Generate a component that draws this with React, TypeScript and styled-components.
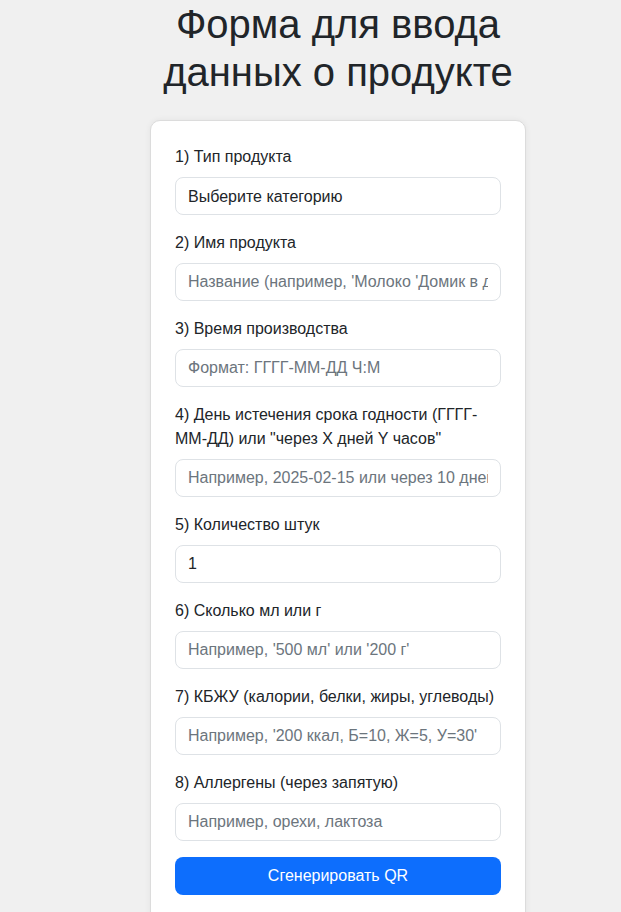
import React from "react";
import styled, { createGlobalStyle } from "styled-components";

const GlobalStyle = createGlobalStyle`
  html, body {
    margin: 0;
    padding: 0;
    background: #f0f0f0;
    font-family: "Liberation Sans", Arial, sans-serif;
    color: #212529;
  }
  * { box-sizing: border-box; }
`;

const Page = styled.div`
  width: 376px;
  margin-left: 150px;
`;

const Title = styled.h1`
  margin: 0 -30px 24px;
  font-size: 40px;
  line-height: 48px;
  font-weight: 400;
  text-align: center;
  color: #212529;
`;

const Card = styled.form`
  background: #fff;
  border: 1px solid #dcdcdc;
  border-radius: 10px;
  box-shadow: 0 0 6px rgba(0, 0, 0, 0.06);
  padding: 24px 24px 40px;
  display: flex;
  flex-direction: column;
`;

const Field = styled.div`
  display: flex;
  flex-direction: column;
  margin-bottom: 16px;
`;

const Label = styled.label`
  font-size: 16px;
  line-height: 24px;
  margin-bottom: 8px;
`;

const Input = styled.input`
  height: 38px;
  width: 100%;
  border: 1px solid #dee2e6;
  border-radius: 8px;
  padding: 0 12px;
  font-family: inherit;
  font-size: 16px;
  color: #212529;
  background: #fff;
  outline: none;
  &::placeholder {
    color: #6c757d;
  }
`;

const Select = styled.select`
  height: 38px;
  width: 100%;
  border: 1px solid #dee2e6;
  border-radius: 8px;
  padding: 0 12px;
  font-family: inherit;
  font-size: 16px;
  color: #212529;
  background: #fff;
  appearance: none;
  outline: none;
`;

const Button = styled.button`
  height: 38px;
  width: 100%;
  border: none;
  border-radius: 8px;
  background: #0d6efd;
  color: #fff;
  font-family: inherit;
  font-size: 16px;
  cursor: pointer;
`;

const fields = [
  { label: "2) Имя продукта", placeholder: "Название (например, 'Молоко 'Домик в деревне'')" },
  { label: "3) Время производства", placeholder: "Формат: ГГГГ-ММ-ДД Ч:М" },
  {
    label: '4) День истечения срока годности (ГГГГ-ММ-ДД) или "через X дней Y часов"',
    placeholder: "Например, 2025-02-15 или через 10 дней 5 часов",
  },
  { label: "5) Количество штук", value: "1" },
  { label: "6) Сколько мл или г", placeholder: "Например, '500 мл' или '200 г'" },
  { label: "7) КБЖУ (калории, белки, жиры, углеводы)", placeholder: "Например, '200 ккал, Б=10, Ж=5, У=30'" },
  { label: "8) Аллергены (через запятую)", placeholder: "Например, орехи, лактоза" },
];

export default function App() {
  return (
    <>
      <GlobalStyle />
      <Page>
        <Title>Форма для ввода данных о продукте</Title>
        <Card onSubmit={(e) => e.preventDefault()}>
          <Field>
            <Label>1) Тип продукта</Label>
            <Select defaultValue="">
              <option value="">Выберите категорию</option>
            </Select>
          </Field>
          {fields.map((f) => (
            <Field key={f.label}>
              <Label>{f.label}</Label>
              <Input placeholder={f.placeholder} defaultValue={f.value} />
            </Field>
          ))}
          <Button type="submit">Сгенерировать QR</Button>
        </Card>
      </Page>
    </>
  );
}
